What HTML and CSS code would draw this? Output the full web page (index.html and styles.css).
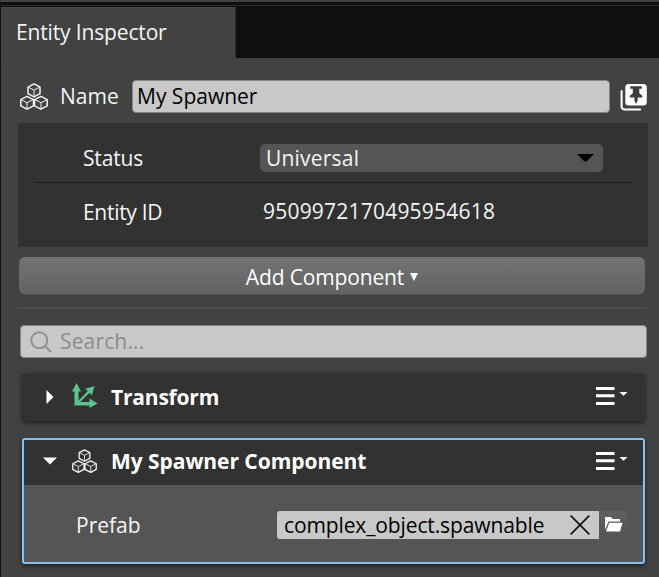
FILE: index.html
```html
<!DOCTYPE html>
<html lang="en">
<head>
<meta charset="utf-8">
<title>Entity Inspector</title>
<link rel="stylesheet" href="styles.css">
</head>
<body>
<svg class="defs" width="0" height="0">
  <symbol id="cubes" viewBox="0 0 28 27">
    <g fill="none" stroke="#f4f4f4" stroke-linejoin="round">
      <path stroke-width="1.5" d="M14 .9l6 3.2v6.500l-6 3.200-6-3.200V4.100zM7 13.400l6.500 3.200v6.300L7 26.200.8 22.900v-6.300zM21 13.400l6.200 3.200v6.300L21 26.200l-6.500-3.300v-6.300z"/>
      <path stroke-width=".95" d="M8 4.100l6 3 6-3M14 7.100v6.500M.8 16.600L7 19.700l6.300-3.100M7 19.700v6.300M14.700 16.600l6.300 3.100 6.200-3.100M21 19.700v6.300"/>
    </g>
  </symbol>
  <symbol id="menu" viewBox="0 0 32 18">
    <path fill="#fff" d="M0 0h18.500v3H0zM0 7.300h18.500v3H0zM0 15h18.500v3H0zM23.500 5h8l-4 3.800z"/>
  </symbol>
</svg>
<div class="inspector">
  <header class="tabs"><div class="tab"><span class="t-title">Entity Inspector</span></div></header>
  <main>
    <div class="name-row">
      <svg class="cubes-lg"><use href="#cubes"/></svg>
      <span class="name-label">Name</span>
      <div class="field name-field">My Spawner</div>
      <svg class="pin" viewBox="0 0 27 27">
        <path fill="none" stroke="#fff" stroke-width="2.100" stroke-linecap="round" d="M1.600 7v15.500a3 3 0 0 0 3 3h15.500"/>
        <rect x="5.300" y="0" width="21.500" height="21.500" rx="3.500" fill="#fff"/>
        <path fill="#3d3d3d" d="M10.300 2.300h11.500v2.500h-2.500v4.500l3 2.500v1.800h-4.600v2.800L16 20l-1.600-3.600v-2.800H9.800v-1.800l3-2.500V4.800h-2.500z"/>
      </svg>
    </div>
    <section class="details">
      <div class="detail status"><span class="label t-status">Status</span>
        <div class="select"><span class="t-universal">Universal</span><svg width="17" height="8"><path d="M0 0h17l-7 7q-1.500 1.200-3 0z"/></svg></div>
      </div>
      <div class="detail entity"><span class="label t-entity">Entity ID</span><span class="id">9509972170495954618</span></div>
    </section>
    <div class="add"><span class="t-add">Add Component</span><svg width="8" height="8"><path fill="#fff" d="M0 0h8L4 8z"/></svg></div>
    <div class="rule"></div>
    <div class="field search">
      <svg width="22" height="22" fill="none" stroke="#919191" stroke-width="2"><circle cx="9.300" cy="9.300" r="8"/><path d="M15 15l6 6"/></svg>
      <span class="t-search">Search...</span>
    </div>
    <section class="card">
      <div class="card-head">
        <span class="fold"><svg width="8" height="14"><path fill="#fff" d="M.5 0L7.500 7l-7 7z"/></svg></span>
        <svg class="axes" viewBox="0 0 26 26"><path fill="#5ac58b" d="M4.500 0l4.500 8.500H6.500v9L15.800 8.200l-2.500-2.500 9.200-2.500-2.600 9-2.400-2.400L8.200 19h9.300v-3.500l8 5-8 4.500v-2.500h-15v-14H0z"/></svg>
        <b class="t-transform">Transform</b>
        <svg class="menu"><use href="#menu"/></svg>
      </div>
    </section>
    <section class="card selected">
      <div class="card-head">
        <span class="fold"><svg width="14" height="8"><path fill="#fff" d="M0 .5h14L7 7.500z"/></svg></span>
        <svg class="cubes-sm"><use href="#cubes"/></svg>
        <b class="t-spawner">My Spawner Component</b>
        <svg class="menu"><use href="#menu"/></svg>
      </div>
      <div class="card-body">
        <span class="prefab">Prefab</span>
        <div class="asset"><span class="t-asset">complex_object.spawnable</span><svg width="20" height="20"><path fill="none" stroke="#151515" stroke-width="1.800" d="M.7.7l18.600 18.600M19.300.7L.7 19.300"/></svg></div>
        <div class="browse"><svg width="19" height="15"><path fill="#fff" d="M1 0h6l1.500 2H16v2.500H4.500L1 13zM5.200 5.700H18.500L16 14.500H2z"/></svg></div>
      </div>
    </section>
  </main>
</div>
</body>
</html>
```
FILE: styles.css
```css
* { box-sizing: border-box; }
body { margin: 0; background: #424242; color: #f4f4f4; font: 21px/28px "Open Sans", "Noto Sans", sans-serif; overflow: hidden; }
svg { display: block; flex: none; }
span, b { white-space: nowrap; }
.defs { position: absolute; }
.inspector { height: 577px; border-top: 2px solid #424242; }
.tabs { height: 56px; background: linear-gradient(#0f0f0f 3px, #292929 3px, #292929 4px, #0f0f0f 4px); padding: 5px 0 0 1px; }
.tab { width: 235px; height: 51px; background: #424242; border-top: 1px solid #4a4a4a; border-right: 1px solid #303030; padding: 10px 0 0 15px; }
.t-title { letter-spacing: -.15px; }
main { height: 519px; border-left: 1px solid #151515; padding: 22px 11px 0 17px; }
.name-row { display: flex; align-items: center; height: 33px; padding-left: 2px; }
.cubes-lg { width: 28px; height: 27px; }
.name-label { width: 72px; margin: -1px 0 0 12px; }
.field { background: #c8c8c8; border: 1px solid #858585; border-radius: 4px; color: #000; }
.name-field { width: 478px; height: 33px; padding: 1px 4px; }
.pin { width: 27px; height: 27px; margin: 1px 0 0 10px; }
.details { height: 124px; margin-top: 10px; padding: 0 16px; background: #323232; }
.detail { display: flex; align-items: center; }
.label { width: 177px; margin-left: 49px; }
.status { align-items: flex-start; height: 60px; padding-top: 21px; border-bottom: 1px solid #1c1c1c; }
.t-status { letter-spacing: -.15px; }
.t-universal { letter-spacing: .2px; }
.select { display: flex; align-items: center; justify-content: space-between; width: 343px; height: 28px; padding: 0 9px 0 6px; background: #555; border-radius: 5px; }
.entity { height: 58px; }
.t-entity { letter-spacing: -.3px; }
.id { margin: -2px 0 0 3px; letter-spacing: .21px; }
.add { display: flex; align-items: center; justify-content: center; gap: 6px; width: 626px; height: 38px; margin: 10px 0 0 1px; padding-top: 2px; border-radius: 6px; border-bottom: 1px solid #555; background: linear-gradient(#737373, #636363); color: #fff; }
.t-add { letter-spacing: -.15px; }
.rule { height: 2px; width: 629px; margin-top: 12px; background: #4c4c4c; }
.search { display: flex; align-items: center; width: 627px; height: 33px; margin: 16px 0 0 2px; padding-left: 9px; gap: 8px; color: #8c8c8c; }
.t-search { margin-top: -1px; letter-spacing: .15px; }
.card { width: 623px; height: 48px; margin: 15px 0 0 4px; border-radius: 4px; background: #323232; box-shadow: 0 2px 4px #222; }
.card-head { display: flex; align-items: center; height: 48px; padding-right: 17px; color: #fff; }
.fold { display: flex; justify-content: center; width: 14px; margin-left: 21px; }
.axes { width: 26px; height: 26px; margin: -2px 13px 0 15px; }
.t-transform { letter-spacing: -.2px; }
.menu { width: 32px; height: 18px; margin: -2px 0 0 auto; }
.selected { height: 126px; margin-top: 17px; border: 2px solid #82c2f5; border-radius: 3px; background: #555; overflow: hidden; }
.selected .card-head { height: 45px; padding: 0 15px 3px 0; background: #323232; }
.selected .fold { margin-left: 19px; }
.selected .menu { margin-top: -1px; }
.cubes-sm { width: 25px; height: 24px; margin: 0 14px 0 15px; }
.t-spawner { letter-spacing: -.05px; }
.card-body { display: flex; align-items: center; height: 79px; padding-left: 52px; }
.prefab { width: 201px; margin-top: 1px; }
.asset { display: flex; align-items: center; justify-content: space-between; width: 322px; height: 28px; padding: 0 9px 0 7px; background: #c8c8c8; border-radius: 3px 0 0 3px; color: #000; }
.t-asset { letter-spacing: -.12px; }
.browse { display: flex; align-items: center; justify-content: center; width: 28px; height: 28px; border-radius: 0 3px 3px 0; background: linear-gradient(#606060, #555 80%); }
```
